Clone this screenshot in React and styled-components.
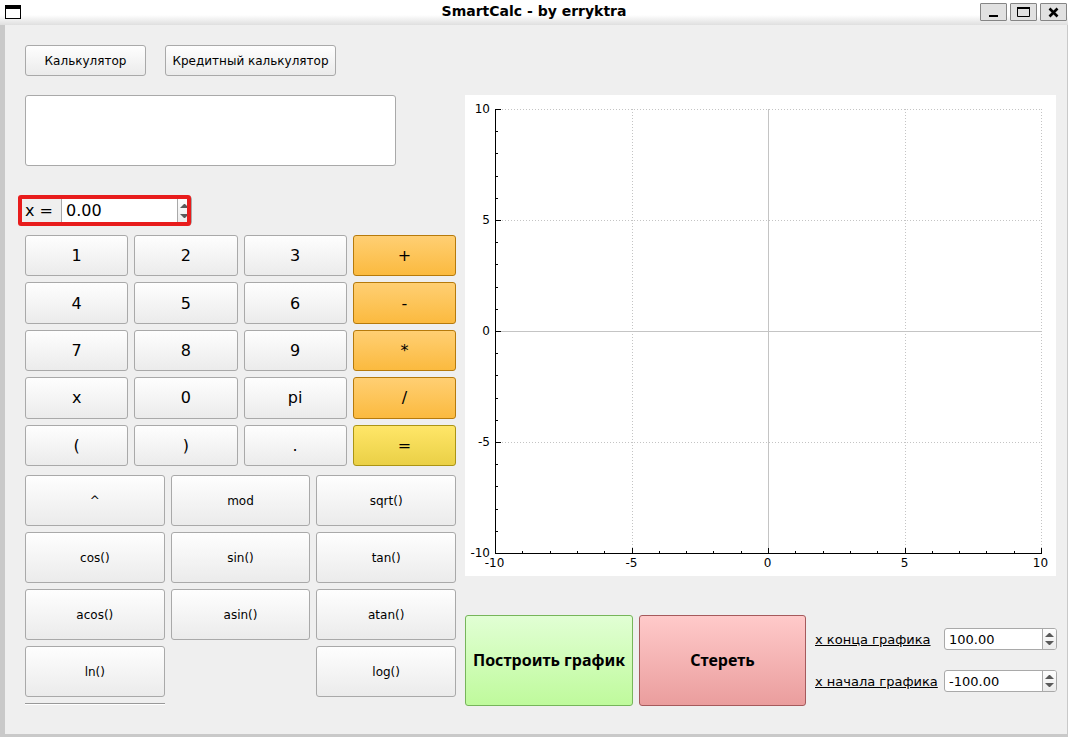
import React, { useState } from "react";
import styled, { createGlobalStyle, css } from "styled-components";

const sans = '"DejaVu Sans", "Liberation Sans", sans-serif';

const GlobalStyle = createGlobalStyle`
  * { box-sizing: border-box; }
  body { margin: 0; background: #efefef; color: #000; font-family: ${sans}; }
  button, input { font-family: inherit; color: inherit; }
`;

const tones = {
  plain: { from: "#fefefe", to: "#ebebeb", line: "#a9a9a9" },
  orange: { from: "#ffcf73", to: "#fbba3f", line: "#b67a0b" },
  yellow: { from: "#ffe668", to: "#ead046", line: "#ab9414" },
  green: { from: "#e1ffd4", to: "#bffa9c", line: "#76b55a" },
  red: { from: "#ffcaca", to: "#ea9d9d", line: "#a55a5c" },
};

const Window = styled.div`
  min-height: 100vh;
  display: flex;
  flex-direction: column;
`;

const TitleBar = styled.header`
  height: 25px;
  display: grid;
  grid-template-columns: 1fr auto 1fr;
  background: linear-gradient(#fff 0, #fff 15px, #dfdfdf 25px);
`;

const TitleIcon = styled.svg`
  margin: 5px;
  display: block;
`;

const Title = styled.h1`
  margin: 0;
  font-size: 14px;
  line-height: 22px;
  font-weight: bold;
`;

const WindowControls = styled.div`
  display: flex;
  justify-content: flex-end;
  gap: 3px;
  padding: 3px 1px 0 0;
`;

const WindowButton = styled.button`
  width: 27px;
  height: 18px;
  padding: 0;
  border: 1px solid #858585;
  border-radius: 1px;
  background: #e1e1e1;
  svg { display: block; }
`;

const Body = styled.main`
  flex: 1;
  border: solid #c9c9c9;
  border-width: 0 1px 3px 5px;
  padding: 20px 10px 20px 20px;
`;

const Modes = styled.nav`
  display: flex;
  gap: 19px;
  margin-bottom: 19px;
`;

const Button = styled.button`
  ${({ $tone = "plain" }) => css`
    background: linear-gradient(${tones[$tone].from}, ${tones[$tone].to});
    border: 1px solid ${tones[$tone].line};
  `}
  border-radius: 3px;
  padding: 0;
  min-width: 0;
`;

const ModeButton = styled(Button)`
  width: ${({ $wide }) => ($wide ? 171 : 121)}px;
  height: 31px;
  font-size: 12px;
`;

const Columns = styled.div`
  display: grid;
  grid-template-columns: minmax(0, 431fr) minmax(0, 592fr);
  gap: 9px;
`;

const Display = styled.input`
  display: block;
  width: 86%;
  height: 71px;
  padding: 0 8px;
  border: 1px solid #a9a9a9;
  border-radius: 3px;
  background: #fff;
  font-size: 20px;
`;

const Argument = styled.div`
  position: relative;
  display: flex;
  width: 167px;
  height: 29px;
  margin: 30px 0 10px;
`;

const ArgumentLabel = styled.label`
  width: 36px;
  font-size: 16px;
  line-height: 29px;
`;

const Highlight = styled.div`
  position: absolute;
  inset: -1px 1px -1px -7px;
  border: 4px solid #e81c1c;
  border-radius: 3px;
  pointer-events: none;
`;

const Spin = styled.div`
  flex: 1;
  min-width: 0;
  display: flex;
  height: ${({ $tall }) => ($tall ? 29 : 22)}px;
  border: 1px solid #a9a9a9;
  border-radius: 3px;
  background: #fff;
  overflow: hidden;
`;

const SpinInput = styled.input`
  flex: 1;
  width: 0;
  min-width: 0;
  border: 0;
  padding: 0 4px;
  background: transparent;
  font-size: ${({ $tall }) => ($tall ? 16 : 13)}px;
`;

const SpinArrows = styled.div`
  width: 14px;
  display: flex;
  flex-direction: column;
  justify-content: center;
  border-left: 1px solid #a9a9a9;
  background: linear-gradient(#fefefe, #ebebeb);
`;

const SpinStep = styled.button`
  height: ${({ $tall }) => ($tall ? 10 : 8)}px;
  padding: 0;
  border: 0;
  background: none;
  svg { display: block; margin: 0 auto; }
`;

const Keypad = styled.div`
  display: grid;
  grid-template-columns: repeat(4, 1fr);
  grid-template-rows: repeat(5, 1fr);
  gap: 6px;
  height: 231px;
  margin-bottom: 9px;
`;

const Key = styled(Button)`
  font-size: 16px;
`;

const Functions = styled.div`
  display: grid;
  grid-template-columns: repeat(3, 1fr);
  grid-template-rows: repeat(4, 51px) 2px;
  gap: 6px;
`;

const FunctionKey = styled(Button)`
  font-size: 12px;
  grid-column: ${({ $column }) => $column || "auto"};
`;

const Rule = styled.hr`
  margin: 0;
  height: 2px;
  border: 0;
  border-top: 1px solid #999;
  background: #fff;
`;

const Chart = styled.svg`
  display: block;
  width: 100%;
  padding-right: 1px;
  background: #fff content-box;
  font-size: 12px;
`;

const Actions = styled.div`
  display: grid;
  grid-template-columns: minmax(0, 168fr) minmax(0, 167fr) minmax(0, 245fr);
  column-gap: 6px;
  margin-top: 39px;
`;

const ActionButton = styled(Button)`
  height: 91px;
  padding-bottom: 2px;
  font-family: "Noto Sans", "Open Sans", sans-serif;
  font-size: 16px;
  font-weight: bold;
`;

const Range = styled.div`
  display: flex;
  flex-direction: column;
  gap: 20px;
  padding: 13px 0 0 3px;
`;

const RangeRow = styled.div`
  display: flex;
  align-items: center;
`;

const RangeLabel = styled.label`
  width: 129px;
  font-size: 13px;
  white-space: nowrap;
  text-decoration: underline;
`;

function SpinBox({ id, initial, tall }) {
  const [value, setValue] = useState(initial);
  const step = (d) => setValue((v) => ((parseFloat(v) || 0) + d).toFixed(2));
  return (
    <Spin $tall={tall}>
      <SpinInput
        id={id}
        $tall={tall}
        inputMode="decimal"
        value={value}
        onChange={(e) => setValue(e.target.value)}
      />
      <SpinArrows>
        <SpinStep type="button" $tall={tall} aria-label="+1" onClick={() => step(1)}>
          <svg width="9" height="4" viewBox="0 0 9 4"><path d="M4 0H5L9 4H0Z" fill="#5a5a5a" /></svg>
        </SpinStep>
        <SpinStep type="button" $tall={tall} aria-label="-1" onClick={() => step(-1)}>
          <svg width="9" height="4" viewBox="0 0 9 4"><path d="M0 0H9L5 4H4Z" fill="#5a5a5a" /></svg>
        </SpinStep>
      </SpinArrows>
    </Spin>
  );
}

const px = (v) => 30.5 + Math.round((v + 10) * 27.3);
const py = (v) => 14.5 + Math.round((10 - v) * 22.2);
const majors = [-10, -5, 0, 5, 10];
const units = Array.from({ length: 21 }, (_, i) => i - 10);

function Plot() {
  return (
    <Chart viewBox="0 0 591 481" role="img" aria-label="График">
      <rect width="591" height="481" fill="#fff" />
      <g stroke="#c4c4c4">
        {majors.filter((v) => v !== -10).map((v) => (
          <g key={v} strokeDasharray={v === 0 ? "none" : "1 2"}>
            <line x1={px(v)} x2={px(v)} y1="14" y2="458" />
            <line x1="31" x2="577" y1={py(v)} y2={py(v)} />
          </g>
        ))}
      </g>
      <g stroke="#000">
        <path d="M30.5 14V459M30 458.5H577" />
        {units.map((v) => {
          const len = v % 5 === 0 ? 6 : 3;
          return (
            <path key={v} d={`M30 ${py(v)}h${len}M${px(v)} 459v-${len}`} />
          );
        })}
      </g>
      {majors.map((v) => (
        <g key={v}>
          <text x="25" y={py(v) + 3.5} textAnchor="end">{v}</text>
          <text x={px(v) - 1} y="472" textAnchor="middle">{v}</text>
        </g>
      ))}
    </Chart>
  );
}

const keys = [
  "1", "2", "3", "+",
  "4", "5", "6", "-",
  "7", "8", "9", "*",
  "x", "0", "pi", "/",
  "(", ")", ".", "=",
];
const keyTone = (k) => (k === "=" ? "yellow" : "+-*/".includes(k) ? "orange" : "plain");

const functions = [
  "^", "mod", "sqrt()",
  "cos()", "sin()", "tan()",
  "acos()", "asin()", "atan()",
  "ln()", "log()",
];

export default function App() {
  const [expression, setExpression] = useState("");
  const append = (s) => setExpression((e) => e + s);
  return (
    <Window>
      <GlobalStyle />
      <TitleBar>
        <TitleIcon width="16" height="14" viewBox="0 0 16 14" aria-hidden="true">
          <rect x="0.5" y="0.5" width="15" height="13" fill="#fff" stroke="#000" />
          <rect width="16" height="4" />
        </TitleIcon>
        <Title>SmartCalc - by erryktra</Title>
        <WindowControls>
          <WindowButton type="button" aria-label="Свернуть">
            <svg width="25" height="16"><rect x="8" y="11" width="9" height="2" /></svg>
          </WindowButton>
          <WindowButton type="button" aria-label="Развернуть">
            <svg width="25" height="16">
              <path d="M6.5 3.5H18.5V12.5H6.5Z" fill="none" stroke="#000" />
              <path d="M6 3H19V5H6Z" />
            </svg>
          </WindowButton>
          <WindowButton type="button" aria-label="Закрыть">
            <svg width="25" height="16">
              <path d="M8.5 4.5L16.5 12.5M16.5 4.5L8.5 12.5" stroke="#000" strokeWidth="2.6" />
            </svg>
          </WindowButton>
        </WindowControls>
      </TitleBar>
      <Body>
        <Modes>
          <ModeButton type="button">Калькулятор</ModeButton>
          <ModeButton type="button" $wide>Кредитный калькулятор</ModeButton>
        </Modes>
        <Columns>
          <section>
            <Display
              aria-label="Выражение"
              value={expression}
              onChange={(e) => setExpression(e.target.value)}
            />
            <Argument>
              <ArgumentLabel htmlFor="x">x =</ArgumentLabel>
              <SpinBox id="x" initial="0.00" tall />
              <Highlight />
            </Argument>
            <Keypad>
              {keys.map((k) => (
                <Key key={k} type="button" $tone={keyTone(k)} onClick={() => k !== "=" && append(k)}>
                  {k}
                </Key>
              ))}
            </Keypad>
            <Functions>
              {functions.map((f) => (
                <FunctionKey
                  key={f}
                  type="button"
                  $column={f === "log()" ? 3 : undefined}
                  onClick={() => append(f.replace(")", ""))}
                >
                  {f}
                </FunctionKey>
              ))}
              <Rule />
            </Functions>
          </section>
          <section>
            <Plot />
            <Actions>
              <ActionButton type="button" $tone="green">Построить график</ActionButton>
              <ActionButton type="button" $tone="red" onClick={() => setExpression("")}>Стереть</ActionButton>
              <Range>
                <RangeRow>
                  <RangeLabel htmlFor="x-end">х конца графика</RangeLabel>
                  <SpinBox id="x-end" initial="100.00" />
                </RangeRow>
                <RangeRow>
                  <RangeLabel htmlFor="x-start">х начала графика</RangeLabel>
                  <SpinBox id="x-start" initial="-100.00" />
                </RangeRow>
              </Range>
            </Actions>
          </section>
        </Columns>
      </Body>
    </Window>
  );
}
